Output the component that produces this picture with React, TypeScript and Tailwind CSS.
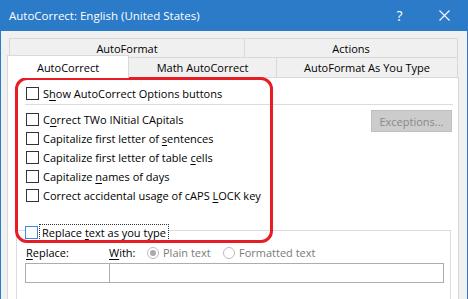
import type { ReactNode } from "react";

function Box({ focused }: { focused?: boolean }) {
  return (
    <span
      className={
        focused
          ? "h-[13px] w-[13px] shrink-0 border border-[#3c8ad8] bg-white"
          : "h-[13px] w-[13px] shrink-0 border border-[#333333] bg-white"
      }
    />
  );
}

function Key({ children }: { children: ReactNode }) {
  return <u className="underline underline-offset-[2px]">{children}</u>;
}

function Option({ children }: { children: ReactNode }) {
  return (
    <div className="flex h-[19px] items-center gap-[4px]">
      <Box />
      <span>{children}</span>
    </div>
  );
}

function Radio({ checked }: { checked?: boolean }) {
  return (
    <svg width="12" height="12" viewBox="0 0 12 12" className="shrink-0">
      <circle cx="6" cy="6" r="5.5" fill="white" stroke="#bcbcbc" />
      {checked && <circle cx="6" cy="6" r="3" fill="#a9a9a9" />}
    </svg>
  );
}

export default function App() {
  return (
    <div className="relative h-[299px] w-[468px] overflow-hidden border-x border-[#2b7bc8] bg-[#f0f0f0] font-['Open_Sans',sans-serif] text-[11px] leading-[15px] text-black">
      {/* Title bar */}
      <div className="flex h-[31px] items-center bg-[#2b7bc8] pl-[8px] text-[11.5px] text-white">
        <span>AutoCorrect: English (United States)</span>
        <span className="ml-auto flex w-[45px] justify-center text-[14px]">?</span>
        <span className="flex w-[45px] justify-center">
          <svg width="11" height="11" viewBox="0 0 11 11">
            <path d="M0.5 0.5 L10.5 10.5 M10.5 0.5 L0.5 10.5" stroke="white" strokeWidth="1.1" />
          </svg>
        </span>
      </div>

      {/* Tabs, back row */}
      <div className="ml-[8px] mt-[7px] flex h-[19px] w-[449px] border-x border-t border-[#d9d9d9]">
        <div className="flex w-[235px] items-center justify-center border-r border-[#d9d9d9]">AutoFormat</div>
        <div className="flex flex-1 items-center justify-center">Actions</div>
      </div>

      {/* Tabs, front row */}
      <div className="-mt-[2px] ml-[6px] flex h-[22px]">
        <div className="relative z-10 flex h-[23px] w-[122px] items-center justify-center self-start border-x border-t border-[#d9d9d9] bg-white">
          AutoCorrect
        </div>
        <div className="flex h-[20px] w-[148px] items-center justify-center self-end border-r border-t border-[#d9d9d9]">
          Math AutoCorrect
        </div>
        <div className="flex h-[20px] w-[181px] items-center justify-center self-end border-r border-t border-[#d9d9d9]">
          AutoFormat As You Type
        </div>
      </div>

      {/* Panel */}
      <div className="ml-[6px] h-[240px] w-[452px] border border-[#d9d9d9] bg-white pt-[6px]">
        <div className="pl-[18px]">
          <Option>
            S<Key>h</Key>ow AutoCorrect Options buttons
          </Option>
        </div>
        <div className="ml-[17px] mt-px h-px w-[428px] bg-[#dcdcdc]" />

        <div className="mt-[5px] flex justify-between pr-[6px]">
          <div className="pl-[18px]">
            <Option>
              C<Key>o</Key>rrect TWo INitial CApitals
            </Option>
            <Option>
              Capitalize first letter of <Key>s</Key>entences
            </Option>
            <Option>
              Capitalize first letter of table <Key>c</Key>ells
            </Option>
            <Option>
              Capitalize <Key>n</Key>ames of days
            </Option>
            <Option>
              Correct accidental usage of cAPS <Key>L</Key>OCK key
            </Option>
          </div>
          <div className="flex h-[22px] w-[81px] items-center justify-center border border-[#bfbfbf] bg-[#cccccc] text-[#8a8a8a]">
            Exceptions...
          </div>
        </div>

        {/* Replace group */}
        <div className="ml-[8px] mt-[25px] h-[80px] w-[435px] border border-[#dcdcdc]">
          <div className="-mt-[7px] ml-[8px] flex h-[17px] w-fit items-center gap-[1px] bg-white">
            <Box focused />
            <span className="flex h-[17px] items-center border border-dotted border-[#333333] px-[2px]">
              <span>
                Replace <Key>t</Key>ext as you type
              </span>
            </span>
          </div>

          <div className="ml-[8px] mt-[4px] flex h-[15px] items-center">
            <span className="w-[84px] pl-px">
              <Key>R</Key>eplace:
            </span>
            <span className="w-[38px]">
              <Key>W</Key>ith:
            </span>
            <Radio checked />
            <span className="ml-[4px] w-[60px] text-[#7a7a7a]">Plain text</span>
            <Radio />
            <span className="ml-[4px] text-[#7a7a7a]">Formatted text</span>
          </div>

          <div className="ml-[8px] mt-[3px] flex">
            <div className="h-[20px] w-[85px] border border-[#adadad] bg-white" />
            <div className="h-[20px] w-[334px] border-y border-r border-[#adadad] bg-white" />
          </div>
        </div>
      </div>

      {/* Red highlight */}
      <div className="absolute left-[14px] top-[77px] h-[166px] w-[258px] rounded-[12px] border-[3px] border-[#e81c24]" />
    </div>
  );
}
